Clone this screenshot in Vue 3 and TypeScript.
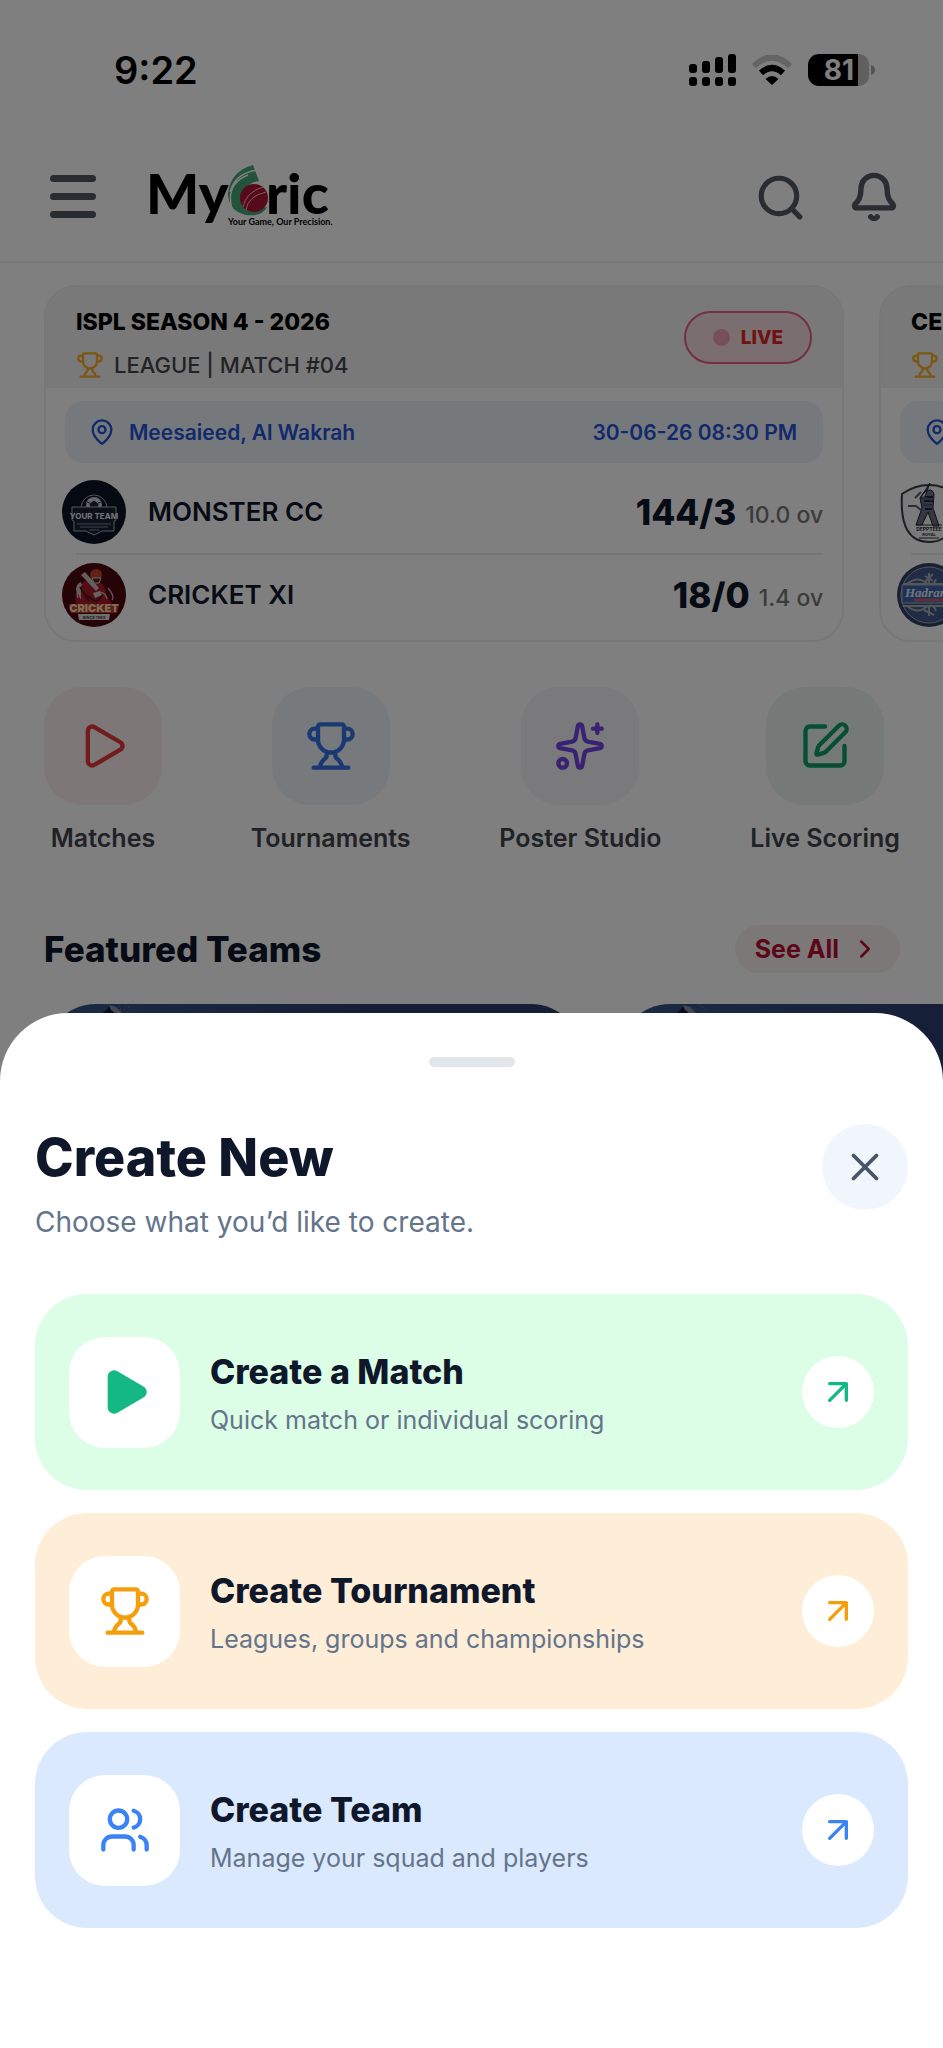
<script setup lang="ts">
type IconName = 'play' | 'trophy' | 'sparkles' | 'edit' | 'users' | 'search' | 'bell' | 'pin' | 'arrow' | 'close' | 'chevron'

const icons: Record<IconName, string> = {
  play: 'M5 5a2 2 0 0 1 3.008-1.728l11.997 6.998a2 2 0 0 1 .003 3.458l-12 7A2 2 0 0 1 5 19z',
  trophy: 'M10 14.66v1.626a2 2 0 0 1-.976 1.696A5 5 0 0 0 7 21.978M14 14.66v1.626a2 2 0 0 0 .976 1.696A5 5 0 0 1 17 21.978M18 9h1.5a2.5 2.5 0 0 0 0-5H18M4 22h16M6 9a6 6 0 0 0 12 0V3a1 1 0 0 0-1-1H7a1 1 0 0 0-1 1zM6 9H4.5a2.5 2.5 0 0 1 0-5H6',
  sparkles: 'M11.017 2.814a1 1 0 0 1 1.966 0l1.051 5.558a2 2 0 0 0 1.594 1.594l5.558 1.051a1 1 0 0 1 0 1.966l-5.558 1.051a2 2 0 0 0-1.594 1.594l-1.051 5.558a1 1 0 0 1-1.966 0l-1.051-5.558a2 2 0 0 0-1.594-1.594l-5.558-1.051a1 1 0 0 1 0-1.966l5.558-1.051a2 2 0 0 0 1.594-1.594zM20 2v4M22 4h-4M6 20a2 2 0 1 1-4 0a2 2 0 1 1 4 0',
  edit: 'M12 3H5a2 2 0 0 0-2 2v14a2 2 0 0 0 2 2h14a2 2 0 0 0 2-2v-7M18.375 2.625a1 1 0 0 1 3 3l-9.013 9.014a2 2 0 0 1-.853.505l-2.873.84a.5.5 0 0 1-.62-.62l.84-2.873a2 2 0 0 1 .506-.852z',
  users: 'M16 21v-2a4 4 0 0 0-4-4H6a4 4 0 0 0-4 4v2M16 3.128a4 4 0 0 1 0 7.744M22 21v-2a4 4 0 0 0-3-3.87M13 7a4 4 0 1 1-8 0a4 4 0 1 1 8 0',
  search: 'M20 11.5a8.5 8.5 0 1 1-17 0a8.5 8.5 0 1 1 17 0M21.5 21.5l-3.8-3.8',
  bell: 'M10.5 21.2a1.9 1.9 0 0 0 3 0M3.262 15.326A1 1 0 0 0 4 17h16a1 1 0 0 0 .74-1.673C19.41 13.956 18 12.499 18 8A6 6 0 0 0 6 8c0 4.499-1.411 5.956-2.738 7.326',
  pin: 'M20 10c0 4.993-5.539 10.193-7.399 11.799a1 1 0 0 1-1.202 0C9.539 20.193 4 14.993 4 10a8 8 0 0 1 16 0M15 10a3 3 0 1 1-6 0a3 3 0 1 1 6 0',
  arrow: 'M7 7h10v10M7 17 17 7',
  close: 'M18 6 6 18M6 6l12 12',
  chevron: 'm9 18 6-6-6-6',
}

const shortcuts: { label: string; icon: IconName; tone: string }[] = [
  { label: 'Matches', icon: 'play', tone: 'red' },
  { label: 'Tournaments', icon: 'trophy', tone: 'blue' },
  { label: 'Poster Studio', icon: 'sparkles', tone: 'violet' },
  { label: 'Live Scoring', icon: 'edit', tone: 'green' },
]

const options: { title: string; text: string; icon: IconName; tone: string }[] = [
  { title: 'Create a Match', text: 'Quick match or individual scoring', icon: 'play', tone: 'mint' },
  { title: 'Create Tournament', text: 'Leagues, groups and championships', icon: 'trophy', tone: 'amber' },
  { title: 'Create Team', text: 'Manage your squad and players', icon: 'users', tone: 'sky' },
]
</script>

<template>
  <div class="screen">
    <div class="status">
      <span class="time">9:22</span>
      <div class="status-icons">
        <svg width="47" height="32" viewBox="0 0 47 32" aria-hidden="true">
          <rect x="0" y="10" width="8" height="9" rx="3" />
          <rect x="13" y="7" width="8" height="12" rx="3" />
          <rect x="26" y="3" width="8" height="16" rx="3" />
          <rect x="39" y="0" width="8" height="19" rx="3" />
          <rect x="0" y="23" width="8" height="9" rx="3" />
          <rect x="13" y="23" width="8" height="9" rx="3" />
          <rect x="26" y="23" width="8" height="9" rx="3" />
          <rect x="39" y="23" width="8" height="9" rx="3" />
        </svg>
        <svg width="40" height="30" viewBox="0 0 40 30" aria-hidden="true">
          <path d="M2 11Q20-6 38 11" fill="none" stroke="#c8c8c8" stroke-width="6" />
          <path d="M9 18Q20 8 31 18" fill="none" stroke="#000" stroke-width="6" />
          <path d="M13.500 24Q20 18 26.500 24L20 30Z" />
        </svg>
        <svg class="battery" width="67" height="32" viewBox="0 0 67 32" aria-hidden="true">
          <path d="M50 0h1a10 10 0 0 1 10 10v12a10 10 0 0 1-10 10h-1z" fill="#c0c0c0" />
          <path d="M50 0H11A11 11 0 0 0 0 11v10a11 11 0 0 0 11 11h39z" />
          <path d="M63 11q4 1 4 5t-4 5z" fill="#a8a8a8" />
          <text x="31" y="26" text-anchor="middle" fill="#fff">81</text>
        </svg>
      </div>
    </div>

    <header class="topbar">
      <button class="plain menu" aria-label="Menu"><i></i><i></i><i></i></button>
      <svg class="logo" width="190" height="66" viewBox="0 0 190 66" role="img" aria-label="MyCric">
        <text class="word" x="-4" y="50">My</text>
        <text class="word" x="116" y="50">ric</text>
        <path d="M103 1Q81 7 78 29Q78 47 96 51Q112 53 117 43Q91 50 91 35Q94 19 109 17Z" fill="#46a675" />
        <path d="M80 28Q85 9 107 6M82 45Q75 20 98 11" fill="none" stroke="#fff" stroke-width="1.500" />
        <circle cx="104" cy="34" r="14" fill="#ae1432" />
        <path d="M93 43Q96 28 113 23M96 46Q98 32 116 28" fill="none" stroke="#f3bcc5" stroke-width="1" />
        <text class="tagline" x="78" y="61">Your Game, Our Precision.</text>
      </svg>
      <div class="tools">
        <button class="plain" aria-label="Search">
          <svg class="icon heavy" width="50" height="50" viewBox="0 0 24 24"><path :d="icons.search" /></svg>
        </button>
        <button class="plain" aria-label="Notifications">
          <svg class="icon heavy" width="52" height="52" viewBox="0 0 24 24"><path :d="icons.bell" /></svg>
        </button>
      </div>
    </header>

    <section class="matches" aria-label="Live matches">
      <article class="match">
        <div class="match-head">
          <div>
            <h3>ISPL SEASON 4 - 2026</h3>
            <p class="stage">
              <svg class="icon gold" width="28" height="28" viewBox="0 0 24 24"><path :d="icons.trophy" /></svg>
              LEAGUE | MATCH #04
            </p>
          </div>
          <span class="live"><i></i>LIVE</span>
        </div>
        <div class="venue">
          <svg class="icon" width="28" height="28" viewBox="0 0 24 24"><path :d="icons.pin" /></svg>
          <span>Meesaieed, Al Wakrah</span>
          <time>30-06-26 08:30 PM</time>
        </div>
        <div class="team">
          <svg width="64" height="64" viewBox="0 0 64 64" aria-hidden="true">
            <circle cx="32" cy="32" r="32" fill="#0b1222" />
            <path d="M19 28a13 13 0 0 1 26 0" fill="none" stroke="#9fa5b2" stroke-width="1" />
            <circle cx="32" cy="25" r="8" fill="#c9ced8" />
            <path d="m32 21 4 3-1 4h-6l-1-4zM25 22l3 1M39 22l-3 1M29 32l1-4" fill="#182033" stroke="#182033" />
            <path d="M10 27h44v13l-2 1v10H40l-8 4-8-4H12V41l-2-1z" fill="#182033" stroke="#a8adb9" stroke-width="1" />
            <text class="crest" x="32" y="39" fill="#e8ebf1">YOUR TEAM</text>
            <path d="M15 44h34M18 47h28M27 50h10" stroke="#7d8596" stroke-width="1" />
          </svg>
          <h4>MONSTER CC</h4>
          <strong>144/3</strong><small>10.0 ov</small>
        </div>
        <div class="team">
          <svg width="64" height="64" viewBox="0 0 64 64" aria-hidden="true">
            <circle cx="32" cy="32" r="32" fill="#4d060e" />
            <path d="M14 42Q11 30 20 20q8-6 16-2 9 5 8 14l7 10z" fill="#a41b2b" />
            <path d="M16 35Q13 27 20 21M38 29q6 1 7 7M46 25q7 8 4 12" fill="none" stroke="#c9a4a6" stroke-width="1.500" />
            <path d="m19 12 4-3 14 16-3 3zM14 27q0-6 5-8v18z" fill="#c9bdb9" />
            <circle cx="34" cy="12" r="6" fill="#c5412f" />
            <path d="M30 15h9l-2 5h-5z" fill="#4a252b" stroke="#ddc5b6" stroke-width="1" />
            <path d="m21 30 12 8q5 0 7-7M18 24l9 14" fill="none" stroke="#54101a" stroke-width="2" />
            <path d="m31 30 7-2 2 4-7 3z" fill="#dbc7bd" />
            <path d="M7 41h50l-2 9H9z" fill="#b93c2f" />
            <text class="crest large" x="32" y="49" fill="#ffd9a5">CRICKET</text>
            <path d="M16 51h32l-1 6H17z" fill="#ddd" />
            <text class="crest tiny" x="32" y="56" fill="#55343a">SINCE 1989</text>
          </svg>
          <h4>CRICKET XI</h4>
          <strong>18/0</strong><small>1.4 ov</small>
        </div>
      </article>

      <article class="match">
        <div class="match-head">
          <div>
            <h3>CE</h3>
            <p class="stage">
              <svg class="icon gold" width="28" height="28" viewBox="0 0 24 24"><path :d="icons.trophy" /></svg>
            </p>
          </div>
        </div>
        <div class="venue">
          <svg class="icon" width="28" height="28" viewBox="0 0 24 24"><path :d="icons.pin" /></svg>
        </div>
        <div class="team">
          <svg width="64" height="64" viewBox="0 0 64 64" aria-hidden="true">
            <path d="M5 14Q18 5 32 5t27 9Q62 62 32 62T5 14z" fill="#f5f5f7" stroke="#3b3d46" stroke-width="2" />
            <path d="m33 3-10 15 4 1zM28 12q7-5 9 2l-1 14 6 18h-6l-5-14-6 13h-6l6-17-2-10z" fill="#6b7089" stroke="#1c202d" />
            <path d="M28 17h8M27 21h9M27 25h8M28 29h7" stroke="#20263c" stroke-width="2" />
            <path d="M11 26h8l5 4M24 17l11 3M25 24l11 2M24 12l-6 6" fill="none" stroke="#555d79" stroke-width="2" />
            <path d="M19 45h26M22 58h20" stroke="#2d3037" />
            <text class="crest small" x="32" y="51" fill="#222631">DEPPTEEE</text>
            <text class="crest tiny" x="32" y="56" fill="#222631">ROYAL</text>
          </svg>
        </div>
        <div class="team">
          <svg width="64" height="64" viewBox="0 0 64 64" aria-hidden="true">
            <circle cx="32" cy="32" r="32" fill="#31425f" />
            <circle cx="32" cy="32" r="28" fill="#40588d" stroke="#9fabc0" stroke-width="1" />
            <path d="M6 21h52M6 43h52M10 21q10-8 18-2t11-3M10 43q10 8 18 2t11 3M32 10v10M28 13l8 5M36 11l-8 8M32 44v9M27 47l10 5" fill="none" stroke="#a6afae" stroke-width="2" />
            <path d="M5 22h54v18H5z" fill="#3e62aa" stroke="#a6afae" />
            <text class="script" x="8" y="34" fill="#e8eef5">Hadrama</text>
            <path d="M17 37h34" stroke="#c45b75" stroke-width="3" />
          </svg>
        </div>
      </article>
    </section>

    <nav class="shortcuts" aria-label="Shortcuts">
      <button v-for="item in shortcuts" :key="item.label" class="plain shortcut">
        <span class="tile" :class="item.tone">
          <svg class="icon" width="52" height="52" viewBox="0 0 24 24"><path :d="icons[item.icon]" /></svg>
        </span>
        <span>{{ item.label }}</span>
      </button>
    </nav>

    <section class="featured">
      <div class="featured-head">
        <h2>Featured Teams</h2>
        <a href="#teams">See All
          <svg class="icon" width="30" height="30" viewBox="0 0 24 24"><path :d="icons.chevron" /></svg>
        </a>
      </div>
      <div id="teams" class="team-cards">
        <div v-for="n in 2" :key="n" class="team-card">
          <svg width="60" height="18" viewBox="0 0 60 18" aria-hidden="true">
            <path d="m0 18 12-10L19 1l3 8 9 9z" fill="#171936" />
            <path d="m17 1 7 2 7 7 2 5-7-4-7-5z" fill="#8d91a3" />
            <path d="M28 5l12 3M33 1l12 8" stroke="#7d869d" stroke-dasharray="1 3" />
          </svg>
        </div>
      </div>
    </section>

    <div class="backdrop"></div>

    <section class="sheet" role="dialog" aria-modal="true" aria-labelledby="sheet-title">
      <div class="handle"></div>
      <div class="sheet-head">
        <div>
          <h1 id="sheet-title">Create New</h1>
          <p>Choose what you’d like to create.</p>
        </div>
        <button class="plain close" aria-label="Close">
          <svg class="icon" width="46" height="46" viewBox="0 0 24 24"><path :d="icons.close" /></svg>
        </button>
      </div>
      <div class="options">
        <button v-for="option in options" :key="option.title" class="plain option" :class="option.tone">
          <span class="option-icon">
            <svg class="icon" width="52" height="52" viewBox="0 0 24 24"><path :d="icons[option.icon]" /></svg>
          </span>
          <span class="option-copy">
            <span class="option-title">{{ option.title }}</span>
            <span class="option-text">{{ option.text }}</span>
          </span>
          <span class="go">
            <svg class="icon" width="40" height="40" viewBox="0 0 24 24"><path :d="icons.arrow" /></svg>
          </span>
        </button>
      </div>
    </section>
  </div>
</template>

<style>
body { margin: 0; }
</style>

<style scoped>
.screen { position: relative; min-height: 100vh; overflow: hidden; background: #fff; color: #0f172a; font-family: Inter, "Liberation Sans", sans-serif; }
.screen *, .screen *::before { box-sizing: border-box; }
h1, h2, h3, h4, p { margin: 0; }
svg { display: block; flex: none; }
.plain { border: 0; padding: 0; margin: 0; background: none; color: inherit; font: inherit; cursor: pointer; }
.icon { fill: none; stroke: currentColor; stroke-width: 2; stroke-linecap: round; stroke-linejoin: round; }
.heavy { stroke-width: 2.5; }

.status { display: flex; align-items: center; justify-content: space-between; height: 132px; padding: 7px 68px 0 114px; }
.time { font-size: 38px; line-height: 48px; font-weight: 600; color: #000; }
.status-icons { display: flex; align-items: center; gap: 16px; }
.battery text { font: 700 28px Inter, sans-serif; }

.topbar { display: flex; align-items: center; height: 131px; padding: 0 43px 0 50px; border-bottom: 2px solid #f0f1f3; color: #525860; }
.menu { display: flex; flex-direction: column; gap: 11px; width: 46px; margin-right: 54px; }
.menu i { height: 7px; border-radius: 4px; background: currentColor; }
.logo { overflow: visible; }
.word { font: 900 56px Lato, sans-serif; }
.tagline { font: 700 9px Lato, sans-serif; }
.tools { display: flex; align-items: center; gap: 43px; margin-left: auto; }

.matches { display: flex; gap: 35px; padding: 22px 0 0 44px; overflow: hidden; }
.match { flex: 0 0 89%; height: 357px; border: 2px solid #eeeff1; border-radius: 32px; overflow: hidden; background: #fff; }
.match-head { display: flex; align-items: center; justify-content: space-between; height: 101px; padding: 0 30px; background: #f3f3f3; color: #000; }
.match-head > div { padding-top: 10px; }
h3 { font-size: 23px; line-height: 30px; font-weight: 800; }
.stage { display: flex; align-items: center; gap: 10px; height: 28px; margin-top: 14px; font-size: 22px; line-height: 28px; font-weight: 500; color: #43474f; }
.gold { color: #f9ac27; }
.live { display: flex; align-items: center; gap: 11px; height: 53px; padding: 0 27px; border: 2px solid #ea5c84; border-radius: 27px; background: #f6dde1; color: #dc2626; font-size: 19px; font-weight: 800; }
.live i { width: 17px; height: 17px; border-radius: 50%; background: #ee9eb4; }
.venue { display: flex; align-items: center; gap: 13px; height: 62px; margin: 13px 19px 7px; padding: 0 26px 0 23px; border-radius: 18px; background: #edf2f9; color: #2453d6; font-size: 21px; font-weight: 600; }
.venue time { margin-left: auto; }
.team { position: relative; display: flex; align-items: center; height: 83px; padding: 0 19px 0 16px; }
.team + .team::before { content: ""; position: absolute; top: 0; left: 30px; right: 19px; height: 2px; background: #e9eaec; }
h4 { margin-left: 22px; font-size: 26px; line-height: 32px; font-weight: 600; }
strong { margin-left: auto; font-size: 35px; line-height: 42px; font-weight: 800; }
small { margin: 7px 0 0 9px; font-size: 23px; line-height: 28px; font-weight: 500; color: #777; }
.crest { font: 700 8px Inter, sans-serif; text-anchor: middle; }
.large { font-size: 11px; font-weight: 900; }
.small { font-size: 5px; }
.tiny { font-size: 4px; }
.script { font: italic 700 13px "Liberation Serif", serif; }

.shortcuts { display: flex; justify-content: space-between; padding: 45px 43px 0 44px; }
.shortcut { display: flex; flex-direction: column; align-items: center; gap: 17px; font-size: 25px; line-height: 32px; font-weight: 600; color: #40444c; }
.tile { display: grid; place-items: center; width: 118px; height: 118px; border-radius: 38px; }
.red { background: #faf0ee; color: #e5393c; }
.blue { background: #eff4fa; color: #3570e4; }
.violet { background: #f4f2f9; color: #7244e3; }
.green { background: #ebf5f1; color: #0c9c69; }

.featured { padding: 71px 0 0 44px; }
.featured-head { display: flex; align-items: center; justify-content: space-between; padding-right: 43px; }
h2 { font-size: 35px; line-height: 48px; font-weight: 800; }
.featured-head a { display: flex; align-items: center; gap: 11px; height: 48px; padding: 0 20px; border-radius: 24px; background: #f8f0f0; color: #b80d34; font-size: 25px; font-weight: 700; text-decoration: none; }
.team-cards { display: flex; gap: 35px; margin-top: 31px; }
.team-card { flex: 0 0 60%; height: 300px; padding-left: 48px; border-radius: 52px; background: linear-gradient(100deg, #36578a, #2c3b6c 60%, #2c3b6c); }

.backdrop { position: absolute; inset: 0; background: rgba(0, 0, 0, 0.5); }
.sheet { position: absolute; left: 0; right: 0; bottom: 0; padding: 44px 35px 120px; border-radius: 68px 68px 0 0; background: #fff; }
.handle { width: 86px; height: 10px; margin: 0 auto 57px; border-radius: 5px; background: #e2e6eb; }
.sheet-head { display: flex; align-items: flex-start; justify-content: space-between; height: 170px; }
h1 { margin-top: 2px; font-size: 52px; line-height: 64px; font-weight: 800; }
.sheet-head p { margin-top: 14px; font-size: 28px; line-height: 36px; color: #64748b; }
.close { display: grid; place-items: center; width: 86px; height: 86px; border-radius: 50%; background: #f1f6fd; color: #475569; }
.options { display: flex; flex-direction: column; gap: 23px; }
.option { display: flex; align-items: center; height: 196px; padding: 0 34px; border-radius: 52px; text-align: left; }
.option-icon { display: grid; place-items: center; width: 111px; height: 111px; border-radius: 36px; background: #fff; }
.option-copy { display: flex; flex-direction: column; gap: 10px; flex: 1; margin-left: 30px; padding-top: 4px; }
.option-title { font-size: 34px; line-height: 42px; font-weight: 800; color: #0f172a; }
.option-text { font-size: 25px; line-height: 34px; color: #64748b; }
.go { display: grid; place-items: center; width: 72px; height: 72px; border-radius: 50%; background: #fff; }
.mint { background: #dcfde6; color: #14b883; }
.mint .option-icon .icon { fill: currentColor; }
.amber { background: #feedd7; color: #f59e0b; }
.sky { background: #dbe9fe; color: #3b82f6; }
</style>
